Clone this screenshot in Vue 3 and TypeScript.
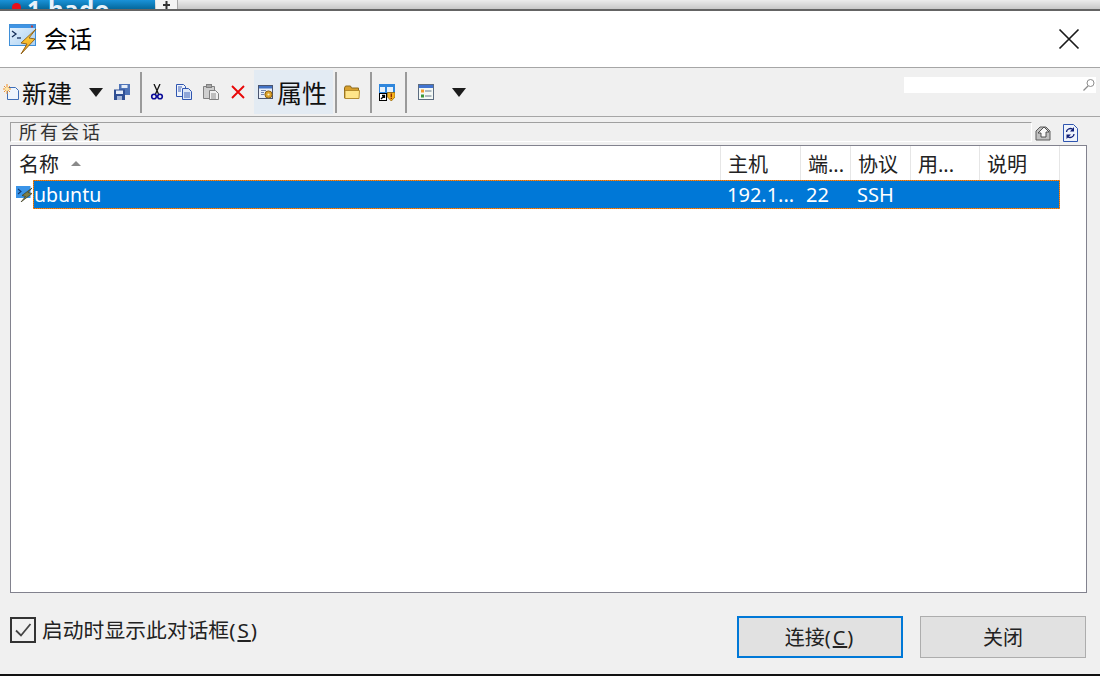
<script setup lang="ts">
interface Col { label: string; width: number; sort?: boolean }
const cols: Col[] = [
  { label: '名称', width: 710, sort: true },
  { label: '主机', width: 80 },
  { label: '端...', width: 50 },
  { label: '协议', width: 60 },
  { label: '用...', width: 69 },
  { label: '说明', width: 80 },
]
const cells: { text: string; width: number; pad: number }[] = [
  { text: '192.1...', width: 80, pad: 7 },
  { text: '22', width: 50, pad: 6 },
  { text: 'SSH', width: 60, pad: 7 },
  { text: '', width: 69, pad: 7 },
  { text: '', width: 80, pad: 7 },
]
</script>

<template>
  <div class="app">
    <div class="tabstrip">
      <div class="tab"><span class="dot"></span><span class="tabtext">1 hado</span></div>
      <div class="plus"><svg width="11" height="9" viewBox="0 0 11 9"><path d="M5.500 1v8M2 5h7" stroke="#333" stroke-width="2" fill="none"/></svg></div>
    </div>

    <div class="title">
      <svg class="logo" width="28" height="32" viewBox="0 0 28 32">
        <defs>
          <linearGradient id="winG" x1="0" y1="0" x2="1" y2="1">
            <stop offset="0" stop-color="#e8f3fd"/>
            <stop offset="1" stop-color="#a9d0f2"/>
          </linearGradient>
          <linearGradient id="boltG" x1="0" y1="0" x2="0" y2="1">
            <stop offset="0" stop-color="#ffe04a"/>
            <stop offset="1" stop-color="#f09a14"/>
          </linearGradient>
        </defs>
        <rect x="0.500" y="1.500" width="26" height="21" fill="url(#winG)" stroke="#3f8fd8"/>
        <rect x="1" y="2" width="25" height="3" fill="#3f94e4"/>
        <rect x="22" y="2.500" width="2" height="2" fill="#c04040"/>
        <path d="M3 8l4 3-4 3" fill="none" stroke="#16305a" stroke-width="1.300"/>
        <path d="M8 15h4" stroke="#16305a" stroke-width="1.300"/>
        <path d="M27 6L12 20l6 1-6 10L26 16l-6-1 7-9z" fill="url(#boltG)" stroke="#8a5a10" stroke-width="0.900"/>
      </svg>
      <span class="title-text">会话</span>
      <svg class="close" width="22" height="22" viewBox="0 0 22 22">
        <path d="M1.500 1.500l19 19M20.500 1.500l-19 19" stroke="#1a1a1a" stroke-width="1.700" fill="none"/>
      </svg>
    </div>

    <div class="toolbar">
      <svg class="ic first" viewBox="0 0 16 16">
        <path d="M4.500 3.500h8l3 3v9h-11z" fill="#eef5fd" stroke="#3f6fb8"/>
        <path d="M4 0v10M0 5h8M1 2l6 6M7 2l-6 6" stroke="#f0902a" stroke-width="1"/>
        <circle cx="4" cy="5" r="2" fill="#ffe9a8"/>
      </svg>
      <span class="big new-label">新建</span>
      <span class="caret new-caret"></span>
      <svg class="ic save" viewBox="0 0 16 16">
        <path d="M5 0h11v11H5z" fill="#4f74b8"/>
        <rect x="7.500" y="1" width="6" height="3" fill="#e6edf8"/>
        <path d="M0 5.500h11V16H0z" fill="#2f4f94"/>
        <rect x="2" y="6.500" width="7" height="3.500" fill="#e6edf8"/>
        <rect x="3" y="12" width="5" height="4" fill="#a6b8da"/>
      </svg>
      <span class="sep sep1"></span>
      <svg class="ic m7" viewBox="0 0 16 16">
        <path d="M5 0l4.500 10M11 0L6.500 10" stroke="#111" stroke-width="1.300" fill="none"/>
        <circle cx="5" cy="12.500" r="2.300" fill="none" stroke="#0a0a98" stroke-width="1.600"/>
        <circle cx="11" cy="12.500" r="2.300" fill="none" stroke="#0a0a98" stroke-width="1.600"/>
      </svg>
      <svg class="ic m11" viewBox="0 0 16 16">
        <path d="M0.500 0.500h7l2 2v10h-9z" fill="#eef3fb" stroke="#2f55b0"/>
        <path d="M6.500 4.500h6l3 3v8h-9z" fill="#dde7f7" stroke="#2f55b0"/>
        <path d="M2 3h4M2 5h3M2 7h3M8 9h6M8 11h6M8 13h6" stroke="#2f55b0" stroke-width="0.900"/>
      </svg>
      <svg class="ic m11" viewBox="0 0 16 16">
        <path d="M0.500 2.500h11v12h-11z" fill="#cfcfcf" stroke="#808080"/>
        <rect x="3.500" y="0.500" width="5" height="3" fill="#a8a8a8" stroke="#808080"/>
        <path d="M6.500 6.500h6l3 3v6h-9z" fill="#f0f0f0" stroke="#808080"/>
        <path d="M8 10h5M8 12h5M8 14h5" stroke="#808080" stroke-width="0.900"/>
      </svg>
      <svg class="ic m11" viewBox="0 0 16 16">
        <path d="M2 2l12 12M14 2L2 14" stroke="#e80808" stroke-width="1.900" fill="none"/>
      </svg>
      <div class="prop">
        <svg class="ic" viewBox="0 0 16 16">
          <rect x="0.500" y="1.500" width="14" height="13" fill="#e8eef8" stroke="#4a5570"/>
          <rect x="1" y="2" width="13" height="2.500" fill="#4272c4"/>
          <path d="M3 6.500h5M3 8.500h3M3 10.500h3" stroke="#6478a8" stroke-width="0.900"/>
          <circle cx="10.500" cy="10.500" r="3.600" fill="#dca22a" stroke="#8c6114" stroke-width="1"/>
          <circle cx="10.500" cy="10.500" r="1.100" fill="#fff2c4"/>
        </svg>
        <span class="big prop-label">属性</span>
      </div>
      <span class="sep sep2"></span>
      <svg class="ic m7" viewBox="0 0 16 16">
        <path d="M0.500 4l1-2h5l1 2h7v10h-14z" fill="#d9a02c" stroke="#8c6a1c"/>
        <path d="M1 6.500h14.500L15 14.500H1z" fill="#ffe58a" stroke="#b08628" stroke-width="0.900"/>
      </svg>
      <span class="sep sep3"></span>
      <svg class="ic m7 tall" viewBox="0 0 16 17">
        <rect x="0" y="0" width="16" height="10" fill="#2f86dc"/>
        <rect x="1" y="3" width="5" height="5" fill="#e6f1fb"/>
        <rect x="8" y="3" width="6" height="5" fill="#e6f1fb"/>
        <rect x="0.500" y="9.500" width="7" height="7" fill="#fff" stroke="#000"/>
        <path d="M2 15l3-3M3 11.500h2.500V14" stroke="#000" stroke-width="1.300" fill="none"/>
        <path d="M8.500 8.500h7.500v4.500l-3.700 4-3.800-4z" fill="#f5b21a" stroke="#96680c" stroke-width="0.800"/>
        <path d="M12.300 9.500v3.500M12.300 13.800v1.200" stroke="#8a2000" stroke-width="1.300"/>
      </svg>
      <span class="sep sep4"></span>
      <svg class="ic m11" viewBox="0 0 16 16">
        <rect x="0.500" y="0.500" width="15" height="15" fill="#f4f8f4" stroke="#5c6c80"/>
        <rect x="1" y="1" width="14" height="3" fill="#4274d0"/>
        <rect x="3" y="5.500" width="3" height="3" fill="#f09a2c"/>
        <rect x="3" y="10.500" width="3" height="3" fill="#3a963a"/>
        <path d="M7 7h6.500M7 12h6.500" stroke="#66788a"/>
      </svg>
      <span class="caret view-caret"></span>
      <div class="search">
        <svg width="14" height="14" viewBox="0 0 14 14">
          <circle cx="8.500" cy="5" r="3.500" fill="none" stroke="#8c8c8c"/>
          <path d="M6 8l-4.500 4.500" stroke="#8c8c8c" stroke-width="1.200"/>
        </svg>
      </div>
    </div>

    <div class="group-row">
      <div class="group">所有会话</div>
      <svg class="ic up" viewBox="0 0 16 16">
        <path d="M1 6l4-4h6l4 4v9H1z" fill="#c0c0c0" stroke="#5c5c5c"/>
        <path d="M9 2l5 5h-3v5H6V8L3 8z" fill="#f8f8f8" stroke="#444" stroke-width="0.900"/>
      </svg>
      <svg class="refresh" width="15" height="18" viewBox="0 0 15 18">
        <path d="M0.500 0.500h10l4 4v13H0.500z" fill="#eef3fb" stroke="#2f55b0"/>
        <path d="M3.500 8a4 3.500 0 0 1 6-3" fill="none" stroke="#101f78" stroke-width="1.300"/>
        <path d="M11 3v4.500H7z" fill="#101f78"/>
        <path d="M11 10a4 3.500 0 0 1-6 3" fill="none" stroke="#101f78" stroke-width="1.300"/>
        <path d="M3.500 15v-4.500H8z" fill="#101f78"/>
      </svg>
    </div>

    <div class="table">
      <div class="thead">
        <div v-for="c in cols" :key="c.label" class="th" :style="{ width: c.width + 'px' }">
          <span>{{ c.label }}</span>
          <span v-if="c.sort" class="sort"></span>
        </div>
      </div>
      <div class="row">
        <svg class="ic row-icon" viewBox="0 0 16 16">
          <rect x="0" y="0" width="14.500" height="12" fill="#3a94e8"/>
          <path d="M2 3l3 2.500-3 2.500" stroke="#12386e" stroke-width="1.100" fill="none"/>
          <path d="M16 2L6 9.500l3.500 1L5 16l11-8.500-4-1 4-4.500z" fill="#7e7e46" stroke="#3c3c20" stroke-width="0.700"/>
        </svg>
        <div class="selected">
          <div class="cell-name">ubuntu</div>
          <div
            v-for="(c, i) in cells"
            :key="i"
            class="cell"
            :style="{ width: c.width + 'px', paddingLeft: c.pad + 'px' }"
          >{{ c.text }}</div>
        </div>
      </div>
    </div>

    <div class="footer">
      <div class="check">
        <span class="box">
          <svg width="22" height="22" viewBox="0 0 22 22">
            <path d="M4 11.500l5 5L18.500 5" fill="none" stroke="#444" stroke-width="1.800"/>
          </svg>
        </span>
        <span class="check-label">启动时显示此对话框<span class="mn">(<u>S</u>)</span></span>
      </div>
      <div class="btn primary"><span>连接<span class="mn">(<u>C</u>)</span></span></div>
      <div class="btn secondary"><span>关闭</span></div>
    </div>
    <div class="endline"></div>
  </div>
</template>

<style>
body { margin: 0; background: #f0f0f0; }
</style>

<style scoped>
.app {
  width: 1100px;
  height: 676px;
  overflow: hidden;
  display: flex;
  flex-direction: column;
  background: #f0f0f0;
  color: #1a1a1a;
  font-family: "Noto Sans", "Noto Sans CJK SC", sans-serif;
}
.tabstrip {
  height: 9px;
  flex: none;
  display: flex;
  overflow: hidden;
  background: linear-gradient(#ececec, #c8c8c8);
  border-bottom: 2px solid #646464;
}
.tab {
  width: 155px;
  height: 9px;
  background: linear-gradient(#1a92d8, #04689c);
  display: flex;
  align-items: flex-start;
  overflow: hidden;
}
.dot {
  width: 9px;
  height: 9px;
  margin: 3px 0 0 12px;
  border-radius: 50%;
  background: #e8101a;
  flex: none;
}
.tabtext {
  margin: -5px 0 0 6px;
  font-size: 24px;
  line-height: 28px;
  font-weight: 700;
  color: #e8f2fa;
  letter-spacing: 0.5px;
  white-space: nowrap;
}
.plus {
  width: 21px;
  height: 9px;
  margin-left: 1px;
  background: #f4f4f4;
  border-right: 1px solid #a8a8a8;
  display: flex;
  justify-content: center;
}
.title {
  height: 56px;
  flex: none;
  background: #fff;
  display: flex;
  align-items: center;
  border-bottom: 1px solid #a6a6a6;
}
.logo { margin-left: 9px; margin-top: -1px; flex: none; }
.title-text {
  margin-left: 7px;
  font-size: 24px;
  line-height: 32px;
  color: #000;
}
.close { margin-left: auto; margin-right: 20px; }
.toolbar {
  height: 48px;
  flex: none;
  display: flex;
  align-items: center;
  border-bottom: 1px solid #a6a6a6;
}
.ic { width: 16px; height: 16px; flex: none; display: block; }
.tall { height: 17px; }
.first { margin-left: 3px; }
.big { font-size: 25px; line-height: 32px; color: #111; margin-top: 2px; }
.new-label { margin-left: 3px; width: 50px; }
.caret {
  width: 0;
  height: 0;
  flex: none;
  border-left: 7.500px solid transparent;
  border-right: 7.500px solid transparent;
  border-top: 9px solid #1c1c1c;
}
.new-caret { margin-left: 17px; }
.save { margin-left: 11px; }
.sep { width: 2px; height: 41px; background: #9a9a9a; flex: none; }
.sep1 { margin-left: 10px; }
.sep2 { margin-left: 2px; }
.sep3 { margin-left: 10px; }
.sep4 { margin-left: 10px; }
.m7 { margin-left: 7px; }
.m11 { margin-left: 11px; }
.prop {
  width: 79px;
  height: 44px;
  margin-left: 8px;
  flex: none;
  display: flex;
  align-items: center;
  box-sizing: border-box;
  padding-left: 4px;
  background: #e3ebf3;
}
.prop-label { margin-left: 3px; }
.view-caret { margin-left: 18px; }
.search {
  width: 192px;
  height: 16px;
  margin-left: auto;
  margin-right: 4px;
  margin-top: -14px;
  background: #fff;
  display: flex;
  align-items: center;
  justify-content: flex-end;
}
.group-row {
  height: 23px;
  flex: none;
  margin-top: 5px;
  padding-left: 10px;
  display: flex;
  align-items: flex-start;
}
.group {
  width: 1012px;
  height: 18px;
  border-top: 1px solid #a0a0a0;
  border-left: 1px solid #a0a0a0;
  border-right: 1px solid #fff;
  border-bottom: 1px solid #fff;
  padding-left: 8px;
  font-size: 18px;
  line-height: 18px;
  letter-spacing: 3px;
  overflow: hidden;
  color: #333;
}
.up { margin-left: 3px; margin-top: 3px; }
.refresh { margin-left: 12px; margin-top: 2px; flex: none; display: block; }
.table {
  width: 1077px;
  height: 448px;
  flex: none;
  margin-left: 10px;
  box-sizing: border-box;
  border: 1px solid #82828e;
  background: #fff;
}
.thead { height: 34px; display: flex; }
.th {
  flex: none;
  box-sizing: border-box;
  height: 34px;
  padding-left: 7px;
  border-right: 1px solid #e6e6e6;
  display: flex;
  align-items: center;
  font-size: 20px;
  color: #222;
  white-space: nowrap;
  overflow: hidden;
}
.th:first-child { padding-left: 8px; }
.sort {
  width: 0;
  height: 0;
  margin-left: 12px;
  border-left: 5px solid transparent;
  border-right: 5px solid transparent;
  border-bottom: 5px solid #8a8a8a;
}
.row { display: flex; align-items: flex-start; height: 29px; }
.row-icon { margin-left: 5px; margin-top: 6px; }
.selected {
  margin-left: 1px;
  width: 1027px;
  height: 29px;
  box-sizing: border-box;
  background:
    repeating-linear-gradient(90deg, #ff8a10 0 1px, #b06a30 1px 2px) left top / 100% 1px no-repeat,
    repeating-linear-gradient(90deg, #ff8a10 0 1px, #b06a30 1px 2px) left bottom / 100% 1px no-repeat,
    repeating-linear-gradient(0deg, #ff8a10 0 1px, #b06a30 1px 2px) left top / 1px 100% no-repeat,
    repeating-linear-gradient(0deg, #ff8a10 0 1px, #b06a30 1px 2px) right top / 1px 100% no-repeat,
    #0078d7;
  color: #fff;
  font-size: 20px;
  display: flex;
  align-items: center;
}
.cell-name { width: 687px; flex: none; padding-left: 1px; box-sizing: border-box; font-size: 19.500px; }
.cell { flex: none; box-sizing: border-box; white-space: nowrap; }
.footer {
  flex: 1;
  display: flex;
  align-items: flex-start;
  padding-top: 23px;
  min-height: 0;
}
.check { display: flex; align-items: center; margin-left: 10px; width: 727px; margin-top: 1px; }
.box {
  width: 22px;
  height: 22px;
  border: 2px solid #333;
  background: #f0f0f0;
  flex: none;
  display: block;
}
.box svg { display: block; }
.check-label { margin-left: 6px; font-size: 20.800px; line-height: 26px; margin-top: -1px; color: #222; }
.mn { letter-spacing: 2px; }
.btn {
  width: 166px;
  height: 42px;
  box-sizing: border-box;
  background: #e1e1e1;
  display: flex;
  align-items: center;
  justify-content: center;
  padding-bottom: 2px;
  font-size: 20px;
  white-space: pre;
  color: #222;
}
.primary { border: 2px solid #0078d7; }
.secondary { border: 1px solid #adadad; margin-left: 17px; }
.endline { height: 2px; flex: none; background: #111; }
</style>
